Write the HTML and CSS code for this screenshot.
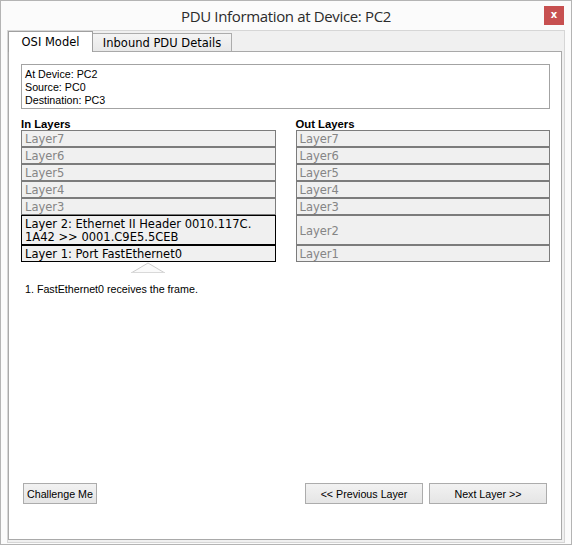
FILE: index.html
```html
<!DOCTYPE html>
<html>
<head>
<meta charset="utf-8">
<title>PDU Information at Device: PC2</title>
<link rel="stylesheet" href="styles.css">
</head>
<body>
<div class="window">
  <div class="titlebar">
    <div class="title">PDU Information at Device: PC2</div>
    <button class="close">x</button>
  </div>
  <div class="frame">
    <div class="tabs">
      <div class="tab active">OSI Model</div>
      <div class="tab">Inbound PDU Details</div>
    </div>
    <div class="panel">
      <div class="info">
        <div>At Device: PC2</div>
        <div>Source: PC0</div>
        <div>Destination: PC3</div>
      </div>
      <div class="layers">
        <div class="col-label">In Layers</div>
        <div class="col-label">Out Layers</div>
        <div class="layer">Layer7</div>
        <div class="layer">Layer7</div>
        <div class="layer">Layer6</div>
        <div class="layer">Layer6</div>
        <div class="layer">Layer5</div>
        <div class="layer">Layer5</div>
        <div class="layer">Layer4</div>
        <div class="layer">Layer4</div>
        <div class="layer">Layer3</div>
        <div class="layer">Layer3</div>
        <div class="layer active">Layer 2: Ethernet II Header 0010.117C.<br>1A42 &gt;&gt; 0001.C9E5.5CEB</div>
        <div class="layer center">Layer2</div>
        <div class="layer active">Layer 1: Port FastEthernet0</div>
        <div class="layer">Layer1</div>
        <div class="pointer">
          <svg width="34" height="11" viewBox="0 0 34 11">
            <polygon points="1,10.5 17,1 33,10.5" fill="#fafafa" stroke="none"/>
            <polyline points="1,10.5 17,1 33,10.5" fill="none" stroke="#cccccc" stroke-width="1"/>
            <line x1="0" y1="10.5" x2="34" y2="10.5" stroke="#d9d9d9" stroke-width="1"/>
          </svg>
        </div>
      </div>
      <p class="desc">1. FastEthernet0 receives the frame.</p>
      <div class="actions">
        <button class="btn challenge">Challenge Me</button>
        <div class="nav">
          <button class="btn wide">&lt;&lt; Previous Layer</button>
          <button class="btn wide">Next Layer &gt;&gt;</button>
        </div>
      </div>
    </div>
  </div>
</div>
</body>
</html>
```
FILE: styles.css
```css
* { box-sizing: border-box; }
body { margin: 0; }

.window {
  width: 572px;
  height: 545px;
  border: 1px solid #b4b4b4;
  background: #fbfbfb;
  display: flex;
  flex-direction: column;
  font-family: "Liberation Sans", Arial, sans-serif;
  font-size: 10.7px;
  color: #000;
}

.titlebar {
  flex: none;
  height: 29px;
  display: grid;
  grid-template-columns: 1fr auto 1fr;
  align-items: center;
}

.title {
  grid-column: 2;
  font-family: "Open Sans", sans-serif;
  font-size: 15px;
  letter-spacing: -0.35px;
  color: #2b2b2b;
  white-space: nowrap;
}

.close {
  grid-column: 3;
  justify-self: end;
  align-self: start;
  margin: 5px 7px 0 0;
  width: 20px;
  height: 19px;
  padding: 0 0 2px;
  border: 0;
  background: #c75050;
  color: #fff;
  font: bold 10px "DejaVu Sans", sans-serif;
  line-height: 17px;
}

.frame {
  flex: 1;
  margin: 0 6px 1px;
  border: 1px solid #d6d6d6;
  background: #f0f0f0;
  padding: 0 2px 2px 0;
  display: flex;
  flex-direction: column;
}

.tabs {
  flex: none;
  height: 20px;
  display: flex;
  align-items: flex-end;
}

.tab {
  font-family: "DejaVu Sans", sans-serif;
  font-size: 11.5px;
  width: 140px;
  height: 18px;
  margin-left: -1px;
  padding-top: 1px;
  border: 1px solid #acacac;
  border-bottom: 0;
  background: linear-gradient(#f4f4f4, #e8e8e8);
  display: flex;
  align-items: center;
  justify-content: center;
}

.tab.active {
  width: 85px;
  height: 21px;
  margin-left: 0;
  margin-bottom: -1px;
  padding-top: 0;
  background: #fff;
  border-color: #a0a0a0;
  position: relative;
  z-index: 1;
}

.panel {
  flex: 1;
  background: #fff;
  border: 1px solid #a9a9a9;
  padding: 12px 11px 12px 12px;
  display: flex;
  flex-direction: column;
}

.info {
  border: 1px solid #a3a3a3;
  padding: 3px 3px 1px;
  line-height: 13px;
}

.layers {
  margin-top: 9px;
  display: grid;
  grid-template-columns: 1fr 1fr;
  column-gap: 20px;
  font-family: "DejaVu Sans", sans-serif;
  font-size: 11.5px;
}

.col-label {
  font-family: "Liberation Sans", Arial, sans-serif;
  font-weight: bold;
  font-size: 11.3px;
  line-height: 12px;
}

.layer {
  border: 1px solid #7c7c7c;
  background: #f0f0f0;
  color: #858585;
  padding: 2px 3px 0;
  line-height: 13px;
  white-space: nowrap;
}

.layer.active {
  border-color: #000;
  color: #000;
}

.layer.center {
  display: flex;
  align-items: center;
}

.pointer {
  grid-column: 1;
  height: 11px;
  line-height: 0;
  text-align: center;
}

.desc {
  margin: 10px 0 0 4px;
  line-height: 13px;
}

.actions {
  margin-top: auto;
  margin-bottom: 23px;
  padding: 0 3px 0 2px;
  display: flex;
  justify-content: space-between;
}

.nav {
  display: flex;
  gap: 6px;
}

.btn {
  font-family: "Liberation Sans", Arial, sans-serif;
  font-size: 10.7px;
  color: #000;
  height: 21px;
  padding: 0;
  border: 1px solid #acacac;
  border-radius: 0;
  background: linear-gradient(#f2f2f2, #e5e5e5);
}

.challenge { width: 74px; }
.wide { width: 118px; }
```
